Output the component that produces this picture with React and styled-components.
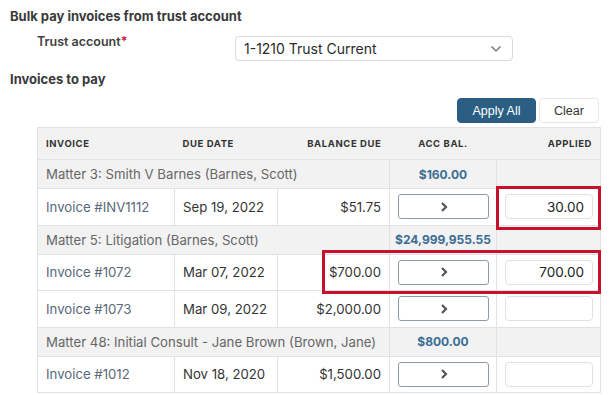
import React from 'react';
import styled, { createGlobalStyle } from 'styled-components';

const GlobalStyle = createGlobalStyle`
  body {
    margin: 0;
    background: #fff;
    font-family: Inter, "Noto Sans", Arial, sans-serif;
    color: #333;
  }
`;

const Page = styled.div`
  position: relative;
  width: 609px;
  height: 395px;
  overflow: hidden;
  padding: 8px 0 0 10px;
  box-sizing: border-box;
`;

const Heading = styled.h2`
  margin: 0;
  font-size: 13px;
  font-weight: 700;
  color: #3a3a3a;
  line-height: 16px;
`;

const FieldRow = styled.div`
  display: flex;
  align-items: flex-start;
  margin: 12px 0 0 27px;
`;

const Label = styled.label`
  width: 198px;
  font-size: 12.5px;
  font-weight: 600;
  color: #3f3f3f;
  line-height: 16px;
  margin-top: -2px;
  span { color: #c8102e; }
`;

const Select = styled.div`
  width: 278px;
  height: 25px;
  box-sizing: border-box;
  border: 1px solid #d6dce1;
  border-radius: 4px;
  display: flex;
  align-items: center;
  justify-content: space-between;
  padding: 0 10px 0 8px;
  font-size: 14px;
  color: #2b2b2b;
`;

const SubHeading = styled(Heading)`
  margin-top: 10px;
`;

const Toolbar = styled.div`
  display: flex;
  justify-content: flex-end;
  gap: 3px;
  width: 589px;
  margin-top: 11px;
`;

const Button = styled.button`
  height: 25px;
  box-sizing: border-box;
  border-radius: 4px;
  font-family: "Liberation Sans", Arial, sans-serif;
  font-size: 12.5px;
  padding: 0;
  width: ${p => p.$w}px;
  background: ${p => (p.$primary ? '#2a5e82' : '#fff')};
  color: ${p => (p.$primary ? '#fff' : '#333')};
  border: 1px solid ${p => (p.$primary ? '#2a5e82' : '#e4e7ea')};
`;

const Table = styled.table`
  margin: 4px 0 0 27px;
  width: 563px;
  border-collapse: collapse;
  table-layout: fixed;
  font-size: 13.2px;
`;

const HeadRow = styled.tr`
  height: 32px;
`;

const Th = styled.th`
  background: #f2f2f2;
  border: 1px solid #e2e2e2;
  border-left: ${p => (p.$first ? '1px solid #e2e2e2' : 'none')};
  border-right: ${p => (p.$last ? '1px solid #e2e2e2' : 'none')};
  padding: 0 8px;
  font-size: 9.5px;
  font-weight: 700;
  letter-spacing: 0.6px;
  color: #333;
  text-align: ${p => p.$align || 'left'};
`;

const MatterRow = styled.tr`
  background: #f2f2f2;
  height: 29px;
`;

const InvoiceRow = styled.tr`
  height: 36.5px;
`;

const MatterCell = styled.td`
  border: 1px solid #e2e2e2;
  padding: 0 8px;
  color: #666;
  white-space: nowrap;
`;

const AccTotal = styled.td`
  border: 1px solid #e2e2e2;
  text-align: center;
  font-size: 12px;
  font-weight: 700;
  color: #3b6d93;
`;

const Td = styled.td`
  border: 1px solid #e2e2e2;
  padding: 0 8px;
  color: ${p => p.$color || '#333'};
  text-align: ${p => p.$align || 'left'};
`;

const ArrowButton = styled.div`
  width: 91px;
  height: 25px;
  box-sizing: border-box;
  margin: 0 auto;
  border: 1px solid #8e9ba6;
  border-radius: 3px;
  display: flex;
  align-items: center;
  justify-content: center;
`;

const Input = styled.div`
  width: 88px;
  height: 25px;
  box-sizing: border-box;
  margin-left: auto;
  border: 1px solid #dde2e6;
  border-radius: 4px;
  padding: 0 8px;
  display: flex;
  align-items: center;
  justify-content: flex-end;
  font-size: 13.5px;
  color: #222;
`;

const Highlight = styled.div`
  position: absolute;
  border: 3px solid #c8102e;
  box-sizing: border-box;
  pointer-events: none;
`;

const Chevron = () => (
  <svg width="10" height="12" viewBox="0 0 10 12">
    <path d="M3 2 L7 6 L3 10" fill="none" stroke="#555" strokeWidth="2.2" />
  </svg>
);

const ChevronDown = () => (
  <svg width="12" height="8" viewBox="0 0 12 8">
    <path d="M1.5 1.5 L6 6 L10.5 1.5" fill="none" stroke="#666" strokeWidth="1.2" />
  </svg>
);

const matters = [
  {
    name: 'Matter 3: Smith V Barnes (Barnes, Scott)',
    total: '$160.00',
    invoices: [{ id: 'Invoice #INV1112', due: 'Sep 19, 2022', bal: '$51.75', applied: '30.00' }],
  },
  {
    name: 'Matter 5: Litigation (Barnes, Scott)',
    total: '$24,999,955.55',
    invoices: [
      { id: 'Invoice #1072', due: 'Mar 07, 2022', bal: '$700.00', applied: '700.00' },
      { id: 'Invoice #1073', due: 'Mar 09, 2022', bal: '$2,000.00', applied: '' },
    ],
  },
  {
    name: 'Matter 48: Initial Consult - Jane Brown (Brown, Jane)',
    total: '$800.00',
    invoices: [{ id: 'Invoice #1012', due: 'Nov 18, 2020', bal: '$1,500.00', applied: '' }],
  },
];

export default function App() {
  return (
    <Page>
      <GlobalStyle />
      <Heading>Bulk pay invoices from trust account</Heading>
      <FieldRow>
        <Label>Trust account<span>*</span></Label>
        <Select>
          1-1210 Trust Current
          <ChevronDown />
        </Select>
      </FieldRow>
      <SubHeading>Invoices to pay</SubHeading>
      <Toolbar>
        <Button $primary $w={79}>Apply All</Button>
        <Button $w={60}>Clear</Button>
      </Toolbar>
      <Table>
        <colgroup>
          <col style={{ width: 137 }} />
          <col style={{ width: 103 }} />
          <col style={{ width: 112 }} />
          <col style={{ width: 107 }} />
          <col style={{ width: 104 }} />
        </colgroup>
        <thead>
          <HeadRow>
            <Th $first>INVOICE</Th>
            <Th>DUE DATE</Th>
            <Th $align="right">BALANCE DUE</Th>
            <Th $align="center">ACC BAL.</Th>
            <Th $align="right" $last>APPLIED</Th>
          </HeadRow>
        </thead>
        <tbody>
          {matters.map(m => (
            <React.Fragment key={m.name}>
              <MatterRow>
                <MatterCell colSpan={3}>{m.name}</MatterCell>
                <AccTotal>{m.total}</AccTotal>
                <MatterCell />
              </MatterRow>
              {m.invoices.map(inv => (
                <InvoiceRow key={inv.id}>
                  <Td $color="#5a6878">{inv.id}</Td>
                  <Td>{inv.due}</Td>
                  <Td $align="right">{inv.bal}</Td>
                  <Td><ArrowButton><Chevron /></ArrowButton></Td>
                  <Td><Input>{inv.applied}</Input></Td>
                </InvoiceRow>
              ))}
            </React.Fragment>
          ))}
        </tbody>
      </Table>
      <Highlight style={{ left: 496, top: 186, width: 105, height: 44 }} />
      <Highlight style={{ left: 322, top: 250, width: 279, height: 44 }} />
    </Page>
  );
}
